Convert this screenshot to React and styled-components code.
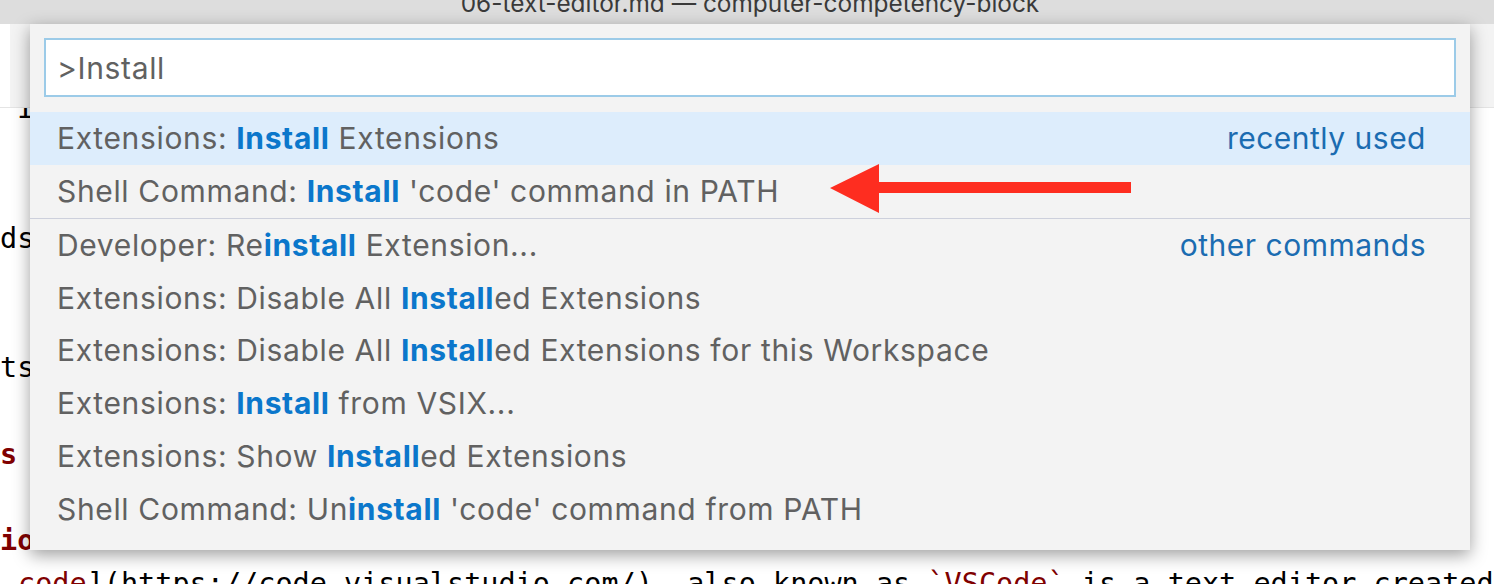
import React from "react";
import styled, { createGlobalStyle } from "styled-components";

const GlobalStyle = createGlobalStyle`
  html, body { margin: 0; padding: 0; background: #ffffff; overflow: hidden; }
  * { box-sizing: border-box; }
`;

const UI_FONT = `"Inter", "Liberation Sans", sans-serif`;
const MONO_FONT = `"DejaVu Sans Mono", "Liberation Mono", monospace`;

const Window = styled.div`
  position: relative;
  width: 1494px;
  height: 584px;
  overflow: hidden;
  display: flex;
  flex-direction: column;
  background: #ffffff;
`;

const TitleBar = styled.div`
  flex: none;
  height: 24px;
  background: #dddddd;
  display: flex;
  justify-content: center;
  overflow: hidden;
`;

const TitleText = styled.div`
  font-family: ${UI_FONT};
  font-size: 24.4px;
  line-height: 30px;
  margin-top: -12px;
  padding-left: 6px;
  color: #3a3a3a;
  white-space: nowrap;
`;

const Toolbar = styled.div`
  flex: none;
  height: 84px;
  display: flex;
  background: #f3f3f3;
  border-bottom: 1px solid #e4e4e4;
`;

const ActiveTab = styled.div`
  width: 10px;
  background: #ffffff;
`;

const EditorArea = styled.div`
  flex: 1;
  display: flex;
  overflow: hidden;
  background: #ffffff;
`;

const Lines = styled.div`
  flex: 1;
  margin-top: -21px;
  font-family: ${MONO_FONT};
  font-size: 28.5px;
  color: #000000;
`;

const Line = styled.div`
  height: 43.2px;
  line-height: 43.2px;
  padding-left: ${(p) => p.$indent || 0}px;
  white-space: pre;
  font-weight: ${(p) => (p.$heading ? 700 : 400)};
  color: ${(p) => (p.$heading ? "#800000" : "#000000")};
`;

const Red = styled.span`
  color: #800000;
`;

const OverviewRuler = styled.div`
  flex: none;
  width: 24px;
  display: flex;
  flex-direction: column;
`;

const RulerCap = styled.div`
  height: 20px;
  background: #f3f3f3;
`;

const Palette = styled.div`
  position: absolute;
  top: 24px;
  left: 30px;
  width: 1440px;
  height: 526px;
  background: #f3f3f3;
  box-shadow: 0 5px 16px rgba(0, 0, 0, 0.38);
  padding: 14px 0 15px;
  display: flex;
  flex-direction: column;
  font-family: ${UI_FONT};
`;

const SearchInput = styled.input`
  margin: 0 14px;
  height: 59px;
  border: 2px solid #9ccbe8;
  background: #ffffff;
  padding: 0 11px;
  font-family: ${UI_FONT};
  font-size: 30px;
  letter-spacing: 0.65px;
  color: #616161;
  outline: none;
`;

const List = styled.div`
  margin-top: 15px;
  display: flex;
  flex-direction: column;
`;

const Row = styled.div`
  position: relative;
  height: ${(p) => (p.$separator ? 53.75 : 52.75)}px;
  border-top: ${(p) => (p.$separator ? "1px solid #cdd0dc" : "none")};
  background: ${(p) => (p.$active ? "#ddedfc" : "transparent")};
  display: flex;
  align-items: center;
  justify-content: space-between;
  padding: 0 44px 0 27px;
  font-size: 30px;
  letter-spacing: 0.65px;
  color: #616161;
  white-space: pre;
`;

const Match = styled.span`
  font-weight: 700;
  color: #0b77cb;
`;

const GroupLabel = styled.span`
  color: #1b6cb1;
  letter-spacing: 0.5px;
`;

const ArrowMark = styled.svg`
  position: absolute;
  left: 796px;
  top: -3px;
  width: 310px;
  height: 54px;
`;

const commands = [
  { pre: "Extensions: ", hit: "Install", post: " Extensions", label: "recently used", active: true },
  { pre: "Shell Command: ", hit: "Install", post: " 'code' command in PATH", arrow: true },
  { pre: "Developer: Re", hit: "install", post: " Extension...", label: "other commands", separator: true },
  { pre: "Extensions: Disable All ", hit: "Install", post: "ed Extensions" },
  { pre: "Extensions: Disable All ", hit: "Install", post: "ed Extensions for this Workspace" },
  { pre: "Extensions: ", hit: "Install", post: " from VSIX..." },
  { pre: "Extensions: Show ", hit: "Install", post: "ed Extensions" },
  { pre: "Shell Command: Un", hit: "install", post: " 'code' command from PATH" },
];

function Arrow() {
  return (
    <ArrowMark viewBox="0 0 310 54">
      <path d="M4 26 L53 2 L53 20 L305 20 L305 31 L53 31 L53 51 Z" fill="#fe2d20" />
    </ArrowMark>
  );
}

export default function App() {
  return (
    <>
      <GlobalStyle />
      <Window>
        <TitleBar>
          <TitleText>06-text-editor.md — computer-competency-block</TitleText>
        </TitleBar>
        <Toolbar>
          <ActiveTab />
        </Toolbar>
        <EditorArea>
          <Lines>
            <Line $indent={16}>1. Install VS Code</Line>
            <Line />
            <Line />
            <Line $indent={0}>ds</Line>
            <Line />
            <Line />
            <Line $indent={0}>ts</Line>
            <Line />
            <Line $indent={0} $heading>s</Line>
            <Line />
            <Line $indent={0} $heading>io</Line>
            <Line $indent={18}>
              <Red>code</Red>](https://code.visualstudio.com/), also known as <Red>`VSCode`</Red> is a text editor created
            </Line>
          </Lines>
          <OverviewRuler>
            <RulerCap />
          </OverviewRuler>
        </EditorArea>
        <Palette>
          <SearchInput readOnly value=">Install" />
          <List>
            {commands.map((c, i) => (
              <Row key={i} $active={c.active} $separator={c.separator}>
                <span>
                  {c.pre}
                  <Match>{c.hit}</Match>
                  {c.post}
                </span>
                {c.label && <GroupLabel>{c.label}</GroupLabel>}
                {c.arrow && <Arrow />}
              </Row>
            ))}
          </List>
        </Palette>
      </Window>
    </>
  );
}
